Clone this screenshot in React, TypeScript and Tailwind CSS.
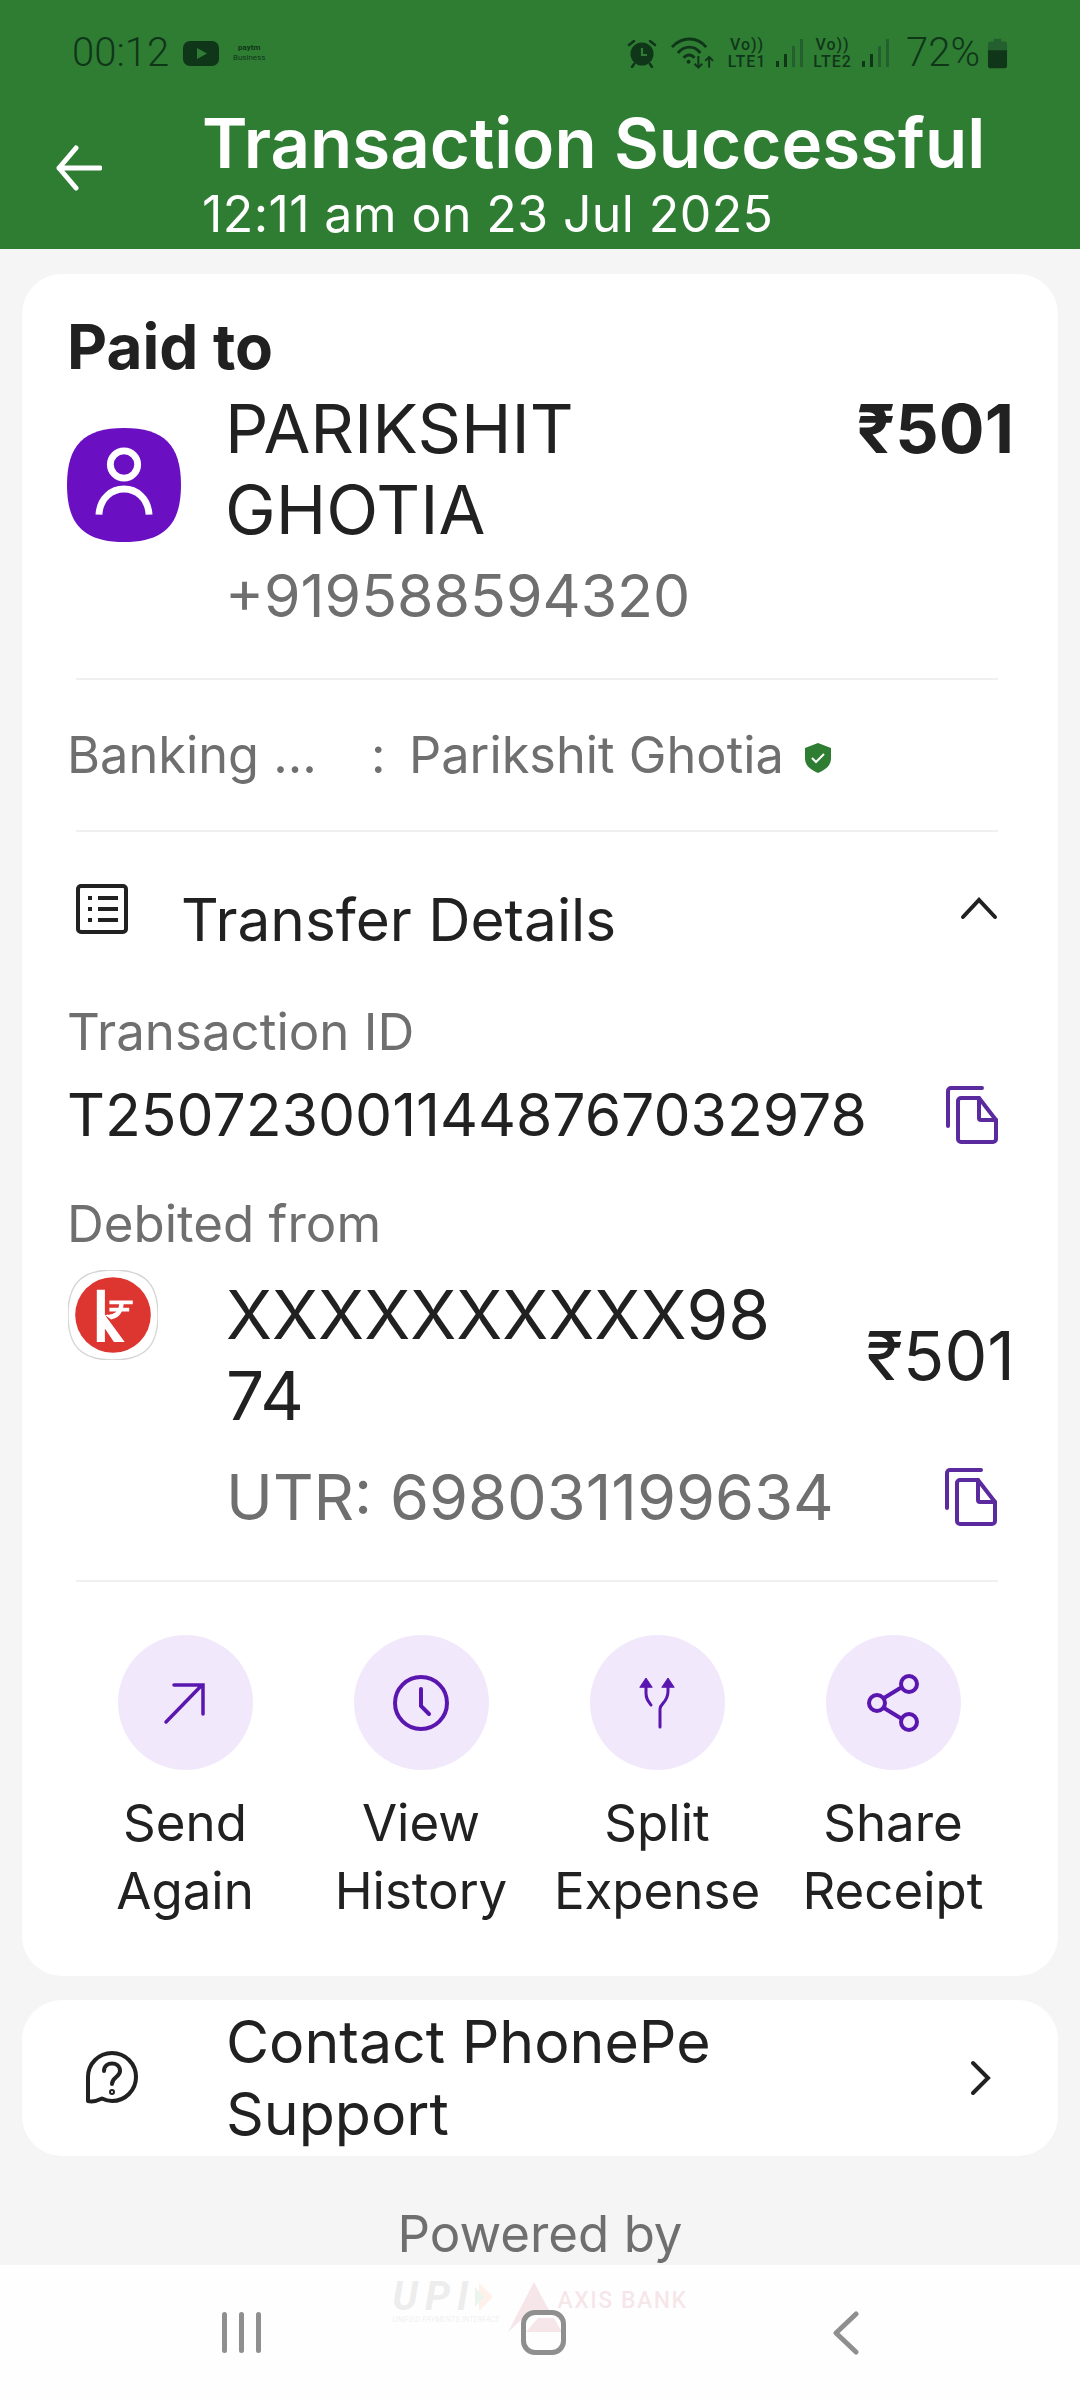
const FONT = "font-['Inter','Noto_Sans',sans-serif]"

const SQUIRCLE = "M50 0C85 0 100 15 100 50C100 85 85 100 50 100C15 100 0 85 0 50C0 15 15 0 50 0Z"

function SignalBars() {
  return (
    <svg width="27" height="30" viewBox="0 0 27 30">
      <rect x="0" y="23" width="3" height="6" fill="#10361a" />
      <rect x="8" y="16" width="3" height="13" fill="#10361a" />
      <rect x="16" y="8" width="3" height="21" fill="#24602f" />
      <rect x="24" y="1" width="3" height="28" fill="#24602f" />
    </svg>
  )
}

function StatusBar() {
  return (
    <div className="flex h-[76px] items-end justify-between pl-[72px] pr-[72px] text-[#10361a]">
      <div className="flex h-[46px] items-center">
        <span className="font-['Roboto',sans-serif] text-[40px] leading-[46px] font-light">00:12</span>
        <svg width="36" height="25" viewBox="0 0 36 25" className="ml-[14px]">
          <rect width="36" height="25" rx="7" fill="#10361a" />
          <path d="M14 7L24 12.500L14 18Z" fill="#2f7d33" />
        </svg>
        <div className="ml-[17px] flex w-[26px] flex-col items-center font-['Roboto',sans-serif] text-[8px] leading-[10px] font-bold">
          <span>paytm</span>
          <span className="font-normal">Business</span>
        </div>
      </div>
      <div className="flex h-[46px] items-center">
        <svg width="30" height="30" viewBox="0 0 30 30" fill="#10361a">
          <circle cx="15" cy="16" r="11.500" />
          <path d="M2 7l5-4M28 7l-5-4M7 26l-2 3M23 26l2 3" stroke="#10361a" strokeWidth="2.500" strokeLinecap="round" />
          <path d="M15 10v7h5" fill="none" stroke="#2f7d33" strokeWidth="2.200" />
        </svg>
        <svg width="45" height="34" viewBox="0 0 46 34" fill="none" stroke="#10361a" strokeWidth="3" className="ml-[13px]">
          <path d="M2 11C12 0 28 0 37 11M8 17C15 9 25 9 31 17M14 22C17 18 22 18 25 22" />
          <circle cx="19" cy="26" r="2" fill="#10361a" stroke="none" />
          <path d="M29 20v12M25 28l4 4 4-4M40 32V21M36 25l4-4 4 4" strokeWidth="2" />
        </svg>
        <div className="ml-[13px] flex w-[38px] flex-col items-center font-['Roboto',sans-serif] text-[16px] leading-[17px] font-medium tracking-[1px]">
          <span>Vo))</span>
          <span>LTE1</span>
        </div>
        <div className="ml-[10px]">
          <SignalBars />
        </div>
        <div className="ml-[9px] flex w-[41px] flex-col items-center font-['Roboto',sans-serif] text-[16px] leading-[17px] font-medium tracking-[1px]">
          <span>Vo))</span>
          <span>LTE2</span>
        </div>
        <div className="ml-[9px]">
          <SignalBars />
        </div>
        <span className="ml-[17px] font-['Roboto',sans-serif] text-[40px] leading-[46px] font-light">72%</span>
        <svg width="21" height="32" viewBox="0 0 22 32" className="ml-[7px]">
          <path d="M7 1h8v3h3a3 3 0 0 1 3 3v8H1V7a3 3 0 0 1 3-3h3Z" fill="#24602f" />
          <path d="M1 13h20v16a3 3 0 0 1-3 3H4a3 3 0 0 1-3-3Z" fill="#10361a" />
        </svg>
      </div>
    </div>
  )
}

function Header() {
  return (
    <header className="h-[249px] shrink-0 bg-[#2f7d33] text-white">
      <StatusBar />
      <div className="flex items-start">
        <div className="ml-[56px] mt-[69px] w-[146px]">
          <svg width="46" height="46" viewBox="0 0 46 46" fill="none" stroke="white" strokeWidth="5" strokeLinecap="round" strokeLinejoin="round">
            <path d="M44 23H3M20 3L3 23l17 20" />
          </svg>
        </div>
        <div className="pt-[29px]">
          <div className="text-[69px] leading-[76px] font-semibold">Transaction Successful</div>
          <div className="mt-[2px] text-[50px] leading-[62px] tracking-[0.4px]">12:11 am on 23 Jul 2025</div>
        </div>
      </div>
    </header>
  )
}

function CopyIcon() {
  return (
    <svg width="52" height="58" viewBox="0 0 52 58" fill="none" stroke="#5b2a9e" strokeWidth="4" strokeLinejoin="round" strokeLinecap="round">
      <path d="M2 40V5a3 3 0 0 1 3-3h31" />
      <path d="M12 15a3 3 0 0 1 3-3h18l17 22v19a3 3 0 0 1-3 3H15a3 3 0 0 1-3-3Z" />
      <path d="M33 12v20a2 2 0 0 0 2 2h15" />
    </svg>
  )
}

function ActionButton({ lines, children }: { lines: string[]; children: React.ReactNode }) {
  return (
    <div className="flex w-[236px] flex-col items-center">
      <div className="flex h-[135px] w-[135px] items-center justify-center rounded-full bg-[#f2e8fb]">
        {children}
      </div>
      <div className="mt-[19px] text-center text-[51px] leading-[68px] text-[#212121]">
        {lines.map((line) => (
          <div key={line}>{line}</div>
        ))}
      </div>
    </div>
  )
}

function PaidCard() {
  return (
    <section className="mx-[22px] mt-[25px] h-[1702px] shrink-0 rounded-[40px] bg-white text-[#212121]">
      <div className="pl-[45px] pt-[39px] text-[62px] leading-[68px] font-bold">Paid to</div>

      <div className="mt-[7px] flex items-start pl-[45px] pr-[44px]">
        <svg width="114" height="114" viewBox="0 0 100 100" className="mt-[40px] shrink-0">
          <path d={SQUIRCLE} fill="#6a0fc2" />
          <circle cx="50" cy="32" r="12" fill="none" stroke="white" strokeWidth="6" />
          <path d="M28 76C30 46 70 46 72 76" fill="none" stroke="white" strokeWidth="6" />
        </svg>
        <div className="ml-[44px] flex-1">
          <div className="text-[68px] leading-[81px]">PARIKSHIT GHOTIA</div>
          <div className="mt-[9px] text-[59px] leading-[74px] text-[#6f6f6f]">+919588594320</div>
        </div>
        <div className="w-[200px] text-right text-[68px] leading-[81px] font-bold">₹501</div>
      </div>

      <div className="ml-[54px] mr-[60px] mt-[45px] h-[2px] bg-[#f0f0f0]" />

      <div className="flex h-[150px] items-center pl-[45px] text-[50.500px] text-[#6f6f6f]">
        <span className="w-[304px]">Banking ...</span>
        <span className="w-[38px]">:</span>
        <span>Parikshit Ghotia</span>
        <svg width="26" height="30" viewBox="0 0 26 30" className="ml-[21px] mt-[6px]">
          <path d="M13 0L26 5v10c0 8-6 12-13 15C6 27 0 23 0 15V5Z" fill="#2e7d32" />
          <path d="M7 15l4 4 8-8" fill="none" stroke="white" strokeWidth="2" />
        </svg>
      </div>

      <div className="ml-[54px] mr-[60px] h-[2px] bg-[#f0f0f0]" />

      <div className="flex items-start pl-[54px] pr-[60px] pt-[52px]">
        <svg width="52" height="50" viewBox="0 0 52 50" fill="none" stroke="#212121" strokeWidth="4" className="shrink-0">
          <rect x="2" y="2" width="48" height="46" rx="3" />
          <path d="M12 14h4M22 14h20M12 25h4M22 25h20M12 36h4M22 36h20" />
        </svg>
        <div className="ml-[53px] mt-[2px] flex-1 text-[58.500px] leading-[68px]">Transfer Details</div>
        <svg width="38" height="24" viewBox="0 0 38 24" fill="none" stroke="#212121" strokeWidth="4" strokeLinecap="round" className="mt-[12px]">
          <path d="M3 21L19 4l16 17" />
        </svg>
      </div>

      <div className="mt-[48px] pl-[45px] text-[51px] leading-[60px] text-[#6f6f6f]">Transaction ID</div>
      <div className="mt-[19px] flex items-center pl-[45px] pr-[60px]">
        <div className="flex-1 text-[58.800px] leading-[68px]">T2507230011448767032978</div>
        <CopyIcon />
      </div>

      <div className="mt-[45px] pl-[45px] text-[51px] leading-[60px] text-[#6f6f6f]">Debited from</div>
      <div className="mt-[6px] flex items-start pl-[46px] pr-[43px]">
        <svg width="90" height="90" viewBox="0 0 100 100" className="mt-[10px] shrink-0">
          <path d={SQUIRCLE} fill="white" stroke="#d4d4d4" strokeWidth="1.500" />
          <circle cx="50" cy="50" r="42" fill="#dd3530" />
          <path d="M32 22h9v28l22 30H51L41 65v15h-9ZM46 34h26v4H46ZM46 42h22v4H46ZM41 50c14 0 16-6 16-16h5c0 12-4 19-14 21Z" fill="white" />
        </svg>
        <div className="ml-[68px] mt-[14px] flex-1">
          <div className="w-[570px] text-[67.500px] leading-[81px] break-all">XXXXXXXXXX9874</div>
          <div className="mt-[24px] text-[63px] leading-[74px] text-[#6f6f6f]">UTR: 698031199634</div>
        </div>
        <div className="flex w-[160px] flex-col items-end">
          <div className="mt-[55px] text-[68px] leading-[80px]">₹501</div>
          <div className="mr-[18px] mt-[73px]">
            <CopyIcon />
          </div>
        </div>
      </div>

      <div className="ml-[54px] mr-[60px] mt-[46px] h-[2px] bg-[#f0f0f0]" />

      <div className="mt-[53px] flex pl-[45px]">
        <ActionButton lines={["Send", "Again"]}>
          <svg width="44" height="44" viewBox="0 0 44 44" fill="none" stroke="#5a17b0" strokeWidth="3.500" strokeLinecap="round">
            <path d="M3 41L39 4M11 4h29v29" />
          </svg>
        </ActionButton>
        <ActionButton lines={["View", "History"]}>
          <svg width="58" height="58" viewBox="0 0 58 58" fill="none" stroke="#5a17b0" strokeWidth="4" strokeLinecap="round">
            <circle cx="29" cy="29" r="26" />
            <path d="M29 15v17l8 8" />
          </svg>
        </ActionButton>
        <ActionButton lines={["Split", "Expense"]}>
          <svg width="38" height="52" viewBox="0 0 38 52" fill="none" stroke="#5a17b0" strokeWidth="3" strokeLinecap="round">
            <path d="M22 50V32c0-6 8-6 8-18V8M8 8v8c0 6 2 8 5 12" />
            <path d="M2 10L8 1l6 9ZM24 10l6-9 6 9Z" fill="#5a17b0" strokeWidth="1" strokeLinejoin="round" />
          </svg>
        </ActionButton>
        <ActionButton lines={["Share", "Receipt"]}>
          <svg width="52" height="58" viewBox="0 0 52 58" fill="none" stroke="#5a17b0" strokeWidth="4">
            <circle cx="10" cy="29" r="8" />
            <circle cx="42" cy="10" r="8" />
            <circle cx="42" cy="48" r="8" />
            <path d="M17 24l18-11M17 34l18 11" />
          </svg>
        </ActionButton>
      </div>
    </section>
  )
}

function SupportCard() {
  return (
    <section className="mx-[22px] mt-[24px] flex h-[156px] shrink-0 items-center rounded-[40px] bg-white text-[#212121]">
      <svg width="52" height="54" viewBox="0 0 52 54" fill="none" stroke="#212121" strokeWidth="4" strokeLinecap="round" strokeLinejoin="round" className="ml-[64px] shrink-0">
        <path d="M2 50V26a24 24 0 1 1 24 24c-4 0-7-1-10-2.500C11 50 6 51 2 50Z" />
        <path d="M18 20c0-10 16-10 16 0 0 6-8 6-8 13" />
        <circle cx="26" cy="41" r="1" />
      </svg>
      <div className="ml-[88px] flex-1 text-[59px] leading-[72px]">
        <div>Contact PhonePe</div>
        <div>Support</div>
      </div>
      <svg width="22" height="36" viewBox="0 0 22 36" fill="none" stroke="#212121" strokeWidth="4" strokeLinecap="round" className="mr-[66px]">
        <path d="M3 3l15 15L3 33" />
      </svg>
    </section>
  )
}

function PoweredBy() {
  return (
    <div className="mt-[47px] flex shrink-0 flex-col items-center">
      <div className="text-[51px] leading-[62px] text-[#6f6f6f]">Powered by</div>
      {/* sits under the translucent nav bar, so the colours here are the full strength ones */}
      <div className="mt-[17px] flex items-start">
        <div className="flex flex-col items-start">
          <div className="flex items-center">
            <span className="font-['Roboto',sans-serif] text-[40px] leading-[30px] font-bold italic tracking-[7px] text-[#4b4b4b]">UPI</span>
            <svg width="18" height="28" viewBox="0 0 18 28">
              <path d="M4 0l14 14L4 28Z" fill="#e87722" />
              <path d="M0 4l9 10L0 24Z" fill="#2e9e4f" />
            </svg>
          </div>
          <span className="mt-[3px] whitespace-nowrap text-[7px] leading-[10px] italic text-[#4b4b4b]">UNIFIED PAYMENTS INTERFACE</span>
        </div>
        <svg width="60" height="50" viewBox="0 0 60 50" className="ml-[8px]">
          <path d="M26 0L42 30H22L0 50Z" fill="#a5052d" />
          <path d="M30 36h16l8 14H18Z" fill="#a5052d" />
        </svg>
        <span className="font-['Roboto',sans-serif] -ml-[10px] mt-[2px] text-[23px] leading-[34px] font-medium tracking-[1.500px] whitespace-nowrap text-[#a5052d]">AXIS BANK</span>
      </div>
    </div>
  )
}

function NavBar() {
  return (
    <nav className="absolute inset-x-0 bottom-0 flex h-[135px] items-start bg-white/90">
      <div className="ml-[222px] mt-[47px] flex gap-[12px]">
        <div className="h-[41px] w-[5px] rounded-full bg-[#8f8f8f]" />
        <div className="h-[41px] w-[5px] rounded-full bg-[#8f8f8f]" />
        <div className="h-[41px] w-[5px] rounded-full bg-[#8f8f8f]" />
      </div>
      <div className="ml-[260px] mt-[45px] h-[45px] w-[45px] rounded-[14px] border-[5px] border-[#8f8f8f]" />
      <svg width="28" height="44" viewBox="0 0 28 44" fill="none" stroke="#8f8f8f" strokeWidth="5" strokeLinecap="round" strokeLinejoin="round" className="ml-[266px] mt-[46px]">
        <path d="M24 3L4 22l20 19" />
      </svg>
    </nav>
  )
}

export default function App() {
  return (
    <div className={`relative flex h-[2400px] w-[1080px] flex-col overflow-hidden bg-[#f5f5f5] ${FONT}`}>
      <Header />
      <PaidCard />
      <SupportCard />
      <PoweredBy />
      <NavBar />
    </div>
  )
}
